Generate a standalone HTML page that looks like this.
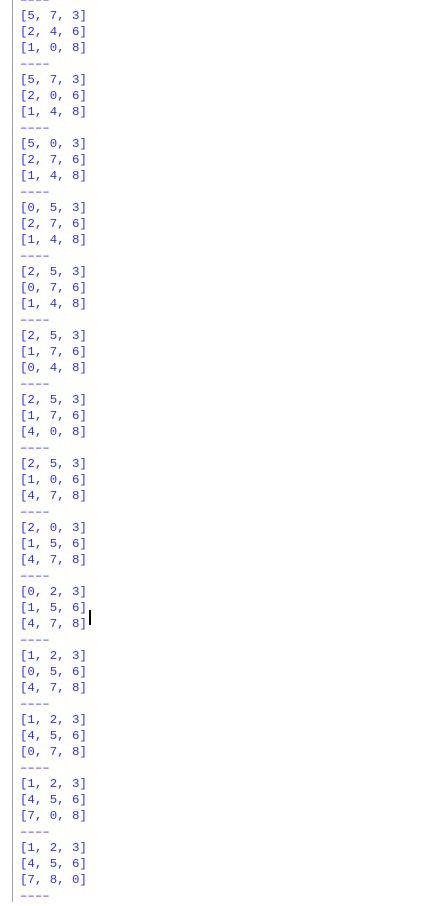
<!DOCTYPE html>
<html><head><style>
html,body{margin:0;padding:0;background:#fff;width:440px;height:906px;overflow:hidden;}
.l{position:absolute;left:12px;top:0;width:1px;height:902px;background:#a0a0a0;}
pre{position:absolute;left:20px;top:-8px;margin:0;font-family:"Liberation Mono",monospace;font-size:12.4px;line-height:16px;color:#3030ff;}
.c{position:absolute;left:89px;top:610px;width:2px;height:15px;background:#000;}
</style></head><body>
<div class="l"></div>
<pre>––––
[5, 7, 3]
[2, 4, 6]
[1, 0, 8]
––––
[5, 7, 3]
[2, 0, 6]
[1, 4, 8]
––––
[5, 0, 3]
[2, 7, 6]
[1, 4, 8]
––––
[0, 5, 3]
[2, 7, 6]
[1, 4, 8]
––––
[2, 5, 3]
[0, 7, 6]
[1, 4, 8]
––––
[2, 5, 3]
[1, 7, 6]
[0, 4, 8]
––––
[2, 5, 3]
[1, 7, 6]
[4, 0, 8]
––––
[2, 5, 3]
[1, 0, 6]
[4, 7, 8]
––––
[2, 0, 3]
[1, 5, 6]
[4, 7, 8]
––––
[0, 2, 3]
[1, 5, 6]
[4, 7, 8]
––––
[1, 2, 3]
[0, 5, 6]
[4, 7, 8]
––––
[1, 2, 3]
[4, 5, 6]
[0, 7, 8]
––––
[1, 2, 3]
[4, 5, 6]
[7, 0, 8]
––––
[1, 2, 3]
[4, 5, 6]
[7, 8, 0]
––––</pre>
<div class="c"></div>
</body></html>
